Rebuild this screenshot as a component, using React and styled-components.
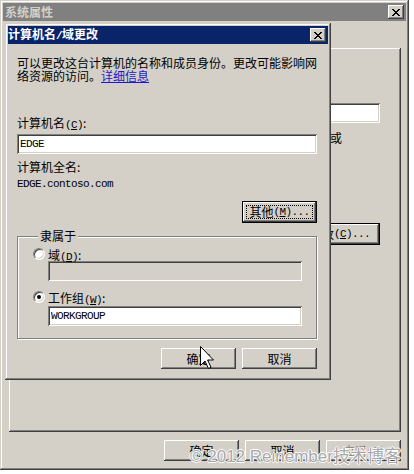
import React from 'react';
import styled, { createGlobalStyle } from 'styled-components';

const FACE = '#d4d0c8';

const raised = `box-shadow: inset -1px -1px #404040, inset 1px 1px #ffffff, inset -2px -2px #808080, inset 2px 2px ${FACE};`;
const sunken = `box-shadow: inset 1px 1px #808080, inset -1px -1px #ffffff, inset 2px 2px #404040, inset -2px -2px ${FACE};`;

const GlobalStyle = createGlobalStyle`
  html, body {
    margin: 0;
    padding: 0;
    background: #ffffff;
  }
  body {
    font-family: "Noto Sans CJK SC", "Liberation Sans", sans-serif;
    font-size: 12px;
    color: #000;
  }
  * {
    box-sizing: border-box;
  }
`;

const Desktop = styled.div`
  position: relative;
  width: 414px;
  height: 474px;
  overflow: hidden;
  background: #ffffff;
`;

const Window = styled.div`
  position: absolute;
  left: ${p => p.$x}px;
  top: ${p => p.$y}px;
  width: ${p => p.$w}px;
  height: ${p => p.$h}px;
  padding: 3px;
  display: flex;
  flex-direction: column;
  background: ${FACE};
  box-shadow: inset -1px -1px #404040, inset 1px 1px ${FACE},
    inset -2px -2px #808080, inset 2px 2px #ffffff;
`;

const TitleBar = styled.div`
  flex: none;
  height: 18px;
  display: flex;
  align-items: center;
  justify-content: space-between;
  padding: 0 2px 0 ${p => (p.$active ? 0 : 2)}px;
  background: ${p => (p.$active ? '#0a246a' : '#808080')};
  color: ${p => (p.$active ? '#ffffff' : FACE)};
  font-weight: bold;
  line-height: 18px;
`;

const CloseBox = styled.span`
  width: 16px;
  height: 14px;
  display: flex;
  align-items: center;
  justify-content: center;
  background: ${FACE};
  ${raised}
`;

const Lat = styled.span`
  font-family: "Liberation Mono", "DejaVu Sans Mono", monospace;
  font-size: 11px;
  letter-spacing: -0.6px;
`;

const Line = styled.div`
  line-height: 14px;
  margin-top: ${p => p.$top || 0}px;
  padding-left: ${p => p.$indent || 0}px;
  white-space: nowrap;
`;

const Field = styled.input`
  display: block;
  width: ${p => (p.$w ? `${p.$w}px` : '100%')};
  height: 20px;
  margin: ${p => p.$top || 0}px 0 0 ${p => p.$left || 0}px;
  padding: 0 3px;
  border: none;
  outline: none;
  background: ${p => (p.disabled ? FACE : '#ffffff')};
  color: #000;
  font-family: "Liberation Mono", "DejaVu Sans Mono", monospace;
  font-size: 11px;
  letter-spacing: -0.6px;
  ${sunken}
`;

const Button = styled.button`
  flex: none;
  width: ${p => p.$w || 75}px;
  height: ${p => p.$h || 21}px;
  margin: 0;
  padding: 0;
  display: flex;
  align-items: stretch;
  justify-content: center;
  font: inherit;
  line-height: 14px;
  color: ${p => (p.disabled ? '#808080' : '#000000')};
  text-shadow: ${p => (p.disabled ? '1px 1px #ffffff' : 'none')};
  background: ${FACE};
  border: ${p => (p.$default ? '1px solid #000000' : 'none')};
  ${raised}
`;

const ButtonFace = styled.span`
  flex: 1;
  display: flex;
  align-items: center;
  justify-content: center;
  margin: 3px;
  border: 1px dotted ${p => (p.$focus ? '#000000' : 'transparent')};
`;

const ButtonRow = styled.div`
  display: flex;
  justify-content: flex-end;
  gap: 6px;
  margin-top: ${p => p.$top || 0}px;
  padding-right: ${p => p.$right || 0}px;
`;

/* background window: only the parts that show beside the dialog */

const TabPanel = styled.div`
  flex: none;
  height: 384px;
  margin: 27px 5px 0 6px;
  padding: 55px 21px 0 14px;
  display: flex;
  flex-direction: column;
  background: ${FACE};
  ${raised}
`;

/* dialog parts */

const DialogBody = styled.div`
  flex: 1;
  display: flex;
  flex-direction: column;
  padding: 12px 11px 12px 9px;
`;

const Intro = styled.p`
  margin: 0;
  line-height: 13px;
`;

const Link = styled.a`
  color: #1a1acc;
  text-decoration: underline;
  cursor: pointer;
`;

const Group = styled.fieldset`
  margin: 6px 0 0;
  padding: 4px 13px 12px 15px;
  min-inline-size: 0;
  border: 1px solid #808080;
  box-shadow: 1px 1px 0 #ffffff, inset 1px 1px 0 #ffffff;
`;

const Legend = styled.legend`
  margin-left: 5px;
  padding: 0 2px;
  line-height: 14px;
  background: ${FACE};
`;

const RadioRow = styled.label`
  display: flex;
  align-items: center;
  gap: 3px;
  height: 14px;
  margin-top: ${p => p.$top || 0}px;
`;

const Radio = styled.span`
  position: relative;
  flex: none;
  width: 12px;
  height: 12px;
  border-radius: 50%;
  background: #ffffff;
  border: 1px solid;
  border-color: #808080 #ffffff #ffffff #808080;
  box-shadow: inset 1px 1px #404040, inset -1px -1px ${FACE};

  &::after {
    content: '';
    display: ${p => (p.$checked ? 'block' : 'none')};
    position: absolute;
    left: 3px;
    top: 3px;
    width: 4px;
    height: 4px;
    border-radius: 50%;
    background: #000000;
  }
`;

const Cursor = styled.svg`
  position: absolute;
  left: 200px;
  top: 346px;
`;

const Watermark = styled.div`
  position: absolute;
  left: 190px;
  top: 448px;
  font-family: "Liberation Sans", "Noto Sans CJK SC", sans-serif;
  font-size: 17px;
  line-height: 17px;
  white-space: nowrap;
  color: #a8a8a8;
  text-shadow: 1px 0 #ffffff, -1px 0 #ffffff, 0 1px #ffffff, 0 -1px #ffffff;
`;

const CROSS = ['11000011', '01100110', '00111100', '00011000', '00111100', '01100110', '11000011'];

function CloseButton() {
  return (
    <CloseBox>
      <svg width="8" height="7" shapeRendering="crispEdges">
        {CROSS.map((row, y) =>
          row.split('').map((c, x) =>
            c === '1' ? <rect key={`${x}-${y}`} x={x} y={y} width="1" height="1" fill="#000" /> : null
          )
        )}
      </svg>
    </CloseBox>
  );
}

function Acc({ k }) {
  return (
    <Lat>
      (<u>{k}</u>)
    </Lat>
  );
}

function SystemProperties() {
  return (
    <Window $x={0} $y={0} $w={409} $h={470}>
      <TitleBar>
        <span>系统属性</span>
        <CloseButton />
      </TitleBar>
      <TabPanel>
        <Field readOnly defaultValue="" />
        <Line $top={8} $indent={307}>
          或
        </Line>
        <ButtonRow $top={78}>
          <Button $w={80} $h={22} $default>
            <ButtonFace>
              更改<Acc k="C" />
              <Lat>...</Lat>
            </ButtonFace>
          </Button>
        </ButtonRow>
      </TabPanel>
      <ButtonRow $top={8} $right={5}>
        <Button>
          <ButtonFace>确定</ButtonFace>
        </Button>
        <Button>
          <ButtonFace>取消</ButtonFace>
        </Button>
        <Button disabled>
          <ButtonFace>
            应用<Acc k="A" />
          </ButtonFace>
        </Button>
      </ButtonRow>
    </Window>
  );
}

function NameChangeDialog() {
  return (
    <Window $x={5} $y={23} $w={326} $h={357}>
      <TitleBar $active>
        <span>
          计算机名<Lat>/</Lat>域更改
        </span>
        <CloseButton />
      </TitleBar>
      <DialogBody>
        <Intro>
          可以更改这台计算机的名称和成员身份。更改可能影响网络资源的访问。<Link>详细信息</Link>
        </Intro>
        <Line $top={34}>
          计算机名<Acc k="C" />:
        </Line>
        <Field $top={2} readOnly defaultValue="EDGE" />
        <Line $top={6}>计算机全名:</Line>
        <Line $top={1}>
          <Lat>EDGE.contoso.com</Lat>
        </Line>
        <ButtonRow $top={10}>
          <Button $h={22} $default>
            <ButtonFace $focus>
              其他<Acc k="M" />
              <Lat>...</Lat>
            </ButtonFace>
          </Button>
        </ButtonRow>
        <Group>
          <Legend>隶属于</Legend>
          <RadioRow>
            <Radio />
            <span>
              域<Acc k="D" />:
            </span>
          </RadioRow>
          <Field $left={15} $w={254} disabled defaultValue="" />
          <RadioRow $top={9}>
            <Radio $checked />
            <span>
              工作组<Acc k="W" />:
            </span>
          </RadioRow>
          <Field $top={2} $left={15} $w={254} readOnly defaultValue="WORKGROUP" />
        </Group>
        <ButtonRow $top={9}>
          <Button>
            <ButtonFace>确定</ButtonFace>
          </Button>
          <Button>
            <ButtonFace>取消</ButtonFace>
          </Button>
        </ButtonRow>
      </DialogBody>
    </Window>
  );
}

export default function App() {
  return (
    <>
      <GlobalStyle />
      <Desktop>
        <SystemProperties />
        <NameChangeDialog />
        <Cursor width="14" height="24" viewBox="0 0 14 24">
          <path
            d="M0.5 0.5 V19.5 L5 15 L8.5 22.5 L11 21.3 L7.6 14 H13.5 Z"
            fill="#ffffff"
            stroke="#000000"
            strokeWidth="1"
          />
        </Cursor>
        <Watermark>© 2012 Reinember技术博客</Watermark>
      </Desktop>
    </>
  );
}
